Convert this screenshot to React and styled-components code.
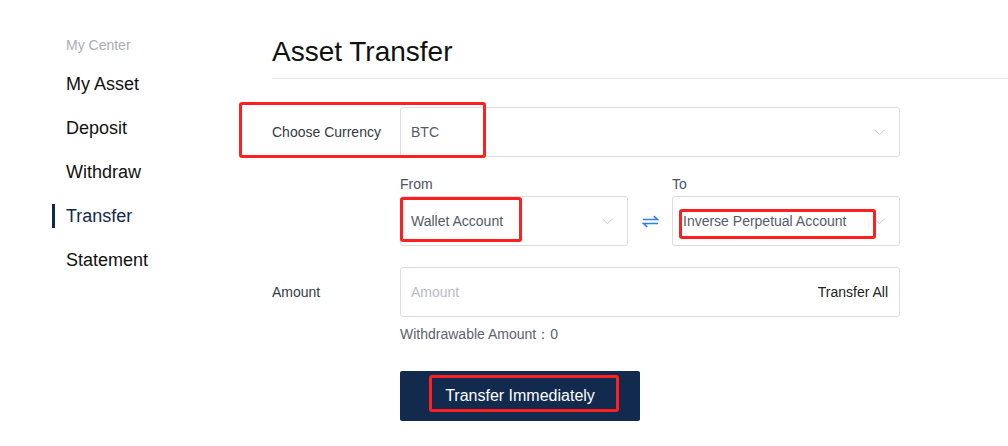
import React from "react";
import styled, { createGlobalStyle } from "styled-components";

const Global = createGlobalStyle`
  html, body { margin: 0; padding: 0; background: #fff; }
  body { font-family: "Liberation Sans", Arial, sans-serif; }
  * { box-sizing: border-box; }
`;

const Page = styled.div`
  display: flex;
  width: 1008px;
  min-height: 446px;
`;

const Sidebar = styled.nav`
  width: 272px;
  flex-shrink: 0;
  padding: 37px 0 0 66px;
`;

const SideTitle = styled.div`
  font-size: 14px;
  line-height: 16px;
  color: #a9adb9;
  margin-bottom: 9px;
`;

const NavItem = styled.div`
  position: relative;
  font-size: 18px;
  line-height: 44px;
  height: 44px;
  color: ${(p) => (p.$active ? "#13294b" : "#111")};
  &::before {
    content: "";
    display: ${(p) => (p.$active ? "block" : "none")};
    position: absolute;
    left: -14px;
    top: 10px;
    width: 3px;
    height: 24px;
    background: #13294b;
  }
`;

const Main = styled.main`
  flex: 1;
  padding-top: 34px;
`;

const Title = styled.h1`
  margin: 0;
  font-size: 28px;
  font-weight: 400;
  line-height: 36px;
  color: #111;
  padding-bottom: 8px;
  border-bottom: 1px solid #e6e7ee;
`;

const Form = styled.div`
  padding-top: 28px;
  display: flex;
  flex-direction: column;
`;

const Row = styled.div`
  position: relative;
  display: flex;
  align-items: ${(p) => p.$align || "center"};
  margin-top: ${(p) => p.$mt || 0}px;
`;

const Label = styled.div`
  width: 128px;
  flex-shrink: 0;
  font-size: 14px;
  color: #333a46;
`;

const Field = styled.div`
  position: relative;
  width: ${(p) => p.$w}px;
  height: 50px;
  border: 1px solid #dcdde4;
  border-radius: 3px;
  display: flex;
  align-items: center;
  padding: 0 ${(p) => p.$pr || 14}px 0 10px;
  font-size: 14px;
  color: ${(p) => p.$color || "#555b66"};
  background: #fff;
`;

const FieldText = styled.span`
  flex: 1;
`;

const Placeholder = styled.span`
  flex: 1;
  color: #b9bcc4;
`;

const Suffix = styled.span`
  color: #222;
  font-size: 14px;
`;

const Col = styled.div`
  display: flex;
  flex-direction: column;
`;

const SmallLabel = styled.div`
  font-size: 14px;
  line-height: 16px;
  color: #4b5262;
  margin-bottom: 4px;
`;

const SwapBox = styled.div`
  width: 44px;
  height: 50px;
  display: flex;
  align-items: center;
  justify-content: center;
  align-self: flex-end;
`;

const Hint = styled.div`
  margin: 9px 0 0 128px;
  font-size: 14px;
  line-height: 16px;
  color: #5c6270;
`;

const Button = styled.button`
  position: relative;
  margin: 29px 0 0 128px;
  width: 240px;
  height: 50px;
  border: none;
  border-radius: 2px;
  background: #122a4e;
  color: #fff;
  font-family: "Liberation Sans", Arial, sans-serif;
  font-size: 16px;
  cursor: pointer;
`;

const Mark = styled.div`
  position: absolute;
  left: ${(p) => p.$l}px;
  top: ${(p) => p.$t}px;
  width: ${(p) => p.$w}px;
  height: ${(p) => p.$h}px;
  border: 3px solid #ff1f1f;
  border-radius: 3px;
  pointer-events: none;
`;

const Chevron = () => (
  <svg width="11" height="7" viewBox="0 0 11 7" fill="none">
    <path d="M0.5 0.8L5.5 5.8L10.5 0.8" stroke="#c3c6cf" strokeWidth="1" />
  </svg>
);

const SwapIcon = () => (
  <svg width="17" height="13" viewBox="0 0 17 13" fill="none">
    <path d="M1 4.5H15.5L11.8 1.2" stroke="#2f7ef5" strokeWidth="1.6" />
    <path d="M16 8.5H1.5L5.2 11.8" stroke="#2f7ef5" strokeWidth="1.6" />
  </svg>
);

export default function App() {
  return (
    <>
      <Global />
      <Page>
        <Sidebar>
          <SideTitle>My Center</SideTitle>
          <NavItem>My Asset</NavItem>
          <NavItem>Deposit</NavItem>
          <NavItem>Withdraw</NavItem>
          <NavItem $active>Transfer</NavItem>
          <NavItem>Statement</NavItem>
        </Sidebar>
        <Main>
          <Title>Asset Transfer</Title>
          <Form>
            <Row>
              <Label>Choose Currency</Label>
              <Field $w={500}>
                <FieldText>BTC</FieldText>
                <Chevron />
              </Field>
              <Mark $l={-33} $t={-5} $w={247} $h={56} />
            </Row>
            <Row $mt={19} $align="flex-end">
              <Label />
              <Col>
                <SmallLabel>From</SmallLabel>
                <Field $w={228}>
                  <FieldText>Wallet Account</FieldText>
                  <Chevron />
                  <Mark $l={-1} $t={0} $w={122} $h={45} />
                </Field>
              </Col>
              <SwapBox>
                <SwapIcon />
              </SwapBox>
              <Col>
                <SmallLabel>To</SmallLabel>
                <Field $w={228}>
                  <FieldText>Inverse Perpetual Account</FieldText>
                  <Chevron />
                  <Mark $l={6} $t={12} $w={197} $h={30} />
                </Field>
              </Col>
            </Row>
            <Row $mt={21}>
              <Label>Amount</Label>
              <Field $w={500} $pr={11}>
                <Placeholder>Amount</Placeholder>
                <Suffix>Transfer All</Suffix>
              </Field>
            </Row>
            <Hint>Withdrawable Amount：0</Hint>
            <Row>
              <Button>
                Transfer Immediately
                <Mark $l={29} $t={4} $w={190} $h={37} />
              </Button>
            </Row>
          </Form>
        </Main>
      </Page>
    </>
  );
}
